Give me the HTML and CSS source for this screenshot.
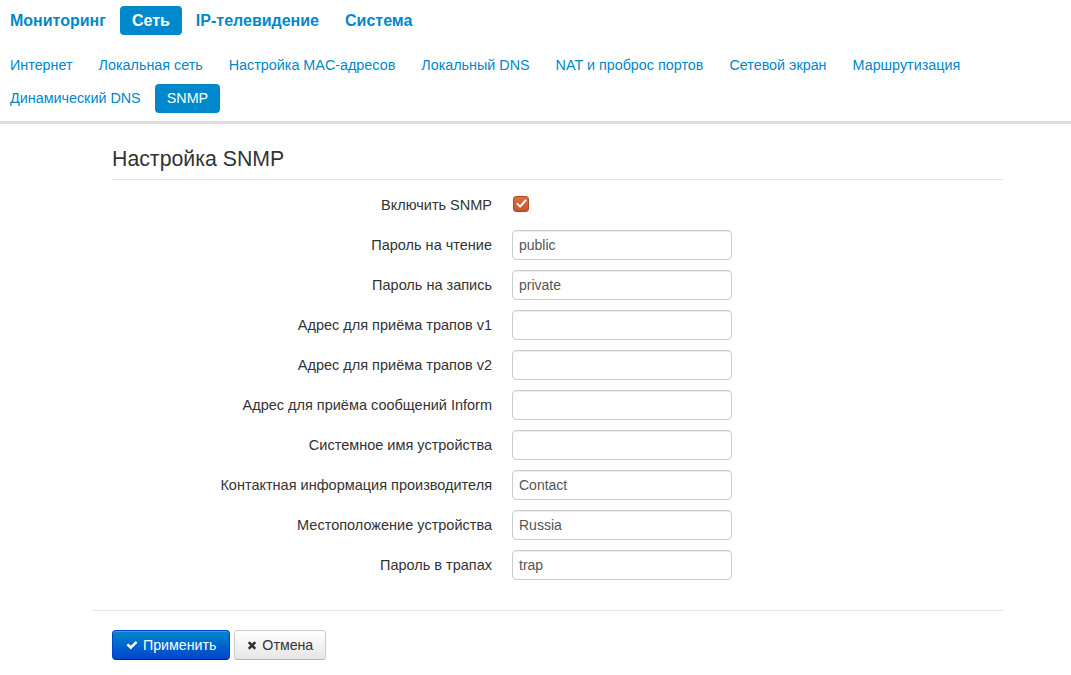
FILE: index.html
```html
<!DOCTYPE html>
<html lang="ru">

<head>
    <meta charset="UTF-8">
    <meta name="viewport" content="width=device-width, initial-scale=1.0">
    <title>SNMP</title>
    <link rel="stylesheet" href="styles.css">
</head>

<body>

    <!-- Main menu -->
    <ul class="nav nav-main">
        <li><a href="#">Мониторинг</a></li>
        <li class="active"><a href="#">Сеть</a></li>
        <li><a href="#">IP-телевидение</a></li>
        <li><a href="#">Система</a></li>
    </ul>

    <!-- Sub menu -->
    <ul class="nav nav-sub">
        <li><a href="#">Интернет</a></li>
        <li><a href="#">Локальная сеть</a></li>
        <li><a href="#">Настройка MAC-адресов</a></li>
        <li><a href="#">Локальный DNS</a></li>
        <li><a href="#">NAT и проброс портов</a></li>
        <li><a href="#">Сетевой экран</a></li>
        <li><a href="#">Маршрутизация</a></li>
        <li><a href="#">Динамический DNS</a></li>
        <li class="active"><a href="#">SNMP</a></li>
    </ul>

    <div class="nav-bar"></div>

    <div class="content">
        <h2>Настройка SNMP</h2>

        <form class="form-horizontal">
            <div class="control-group">
                <label class="control-label">Включить SNMP</label>
                <div class="controls">
                    <span class="checkbox">
                        <svg viewBox="0 0 16 16" width="11" height="11">
                            <path d="M2 8.5 L6 12.5 L14 3.5" fill="none" stroke="#fff" stroke-width="2.8" stroke-linecap="round" stroke-linejoin="round"/>
                        </svg>
                    </span>
                </div>
            </div>
            <div class="control-group">
                <label class="control-label">Пароль на чтение</label>
                <div class="controls"><input type="text" value="public"></div>
            </div>
            <div class="control-group">
                <label class="control-label">Пароль на запись</label>
                <div class="controls"><input type="text" value="private"></div>
            </div>
            <div class="control-group">
                <label class="control-label">Адрес для приёма трапов v1</label>
                <div class="controls"><input type="text" value=""></div>
            </div>
            <div class="control-group">
                <label class="control-label">Адрес для приёма трапов v2</label>
                <div class="controls"><input type="text" value=""></div>
            </div>
            <div class="control-group">
                <label class="control-label">Адрес для приёма сообщений Inform</label>
                <div class="controls"><input type="text" value=""></div>
            </div>
            <div class="control-group">
                <label class="control-label">Системное имя устройства</label>
                <div class="controls"><input type="text" value=""></div>
            </div>
            <div class="control-group">
                <label class="control-label">Контактная информация производителя</label>
                <div class="controls"><input type="text" value="Contact"></div>
            </div>
            <div class="control-group">
                <label class="control-label">Местоположение устройства</label>
                <div class="controls"><input type="text" value="Russia"></div>
            </div>
            <div class="control-group">
                <label class="control-label">Пароль в трапах</label>
                <div class="controls"><input type="text" value="trap"></div>
            </div>

            <div class="form-actions">
                <button type="button" class="btn btn-primary">
                    <svg class="icon" viewBox="0 0 1792 1792" width="12" height="12"><path fill="#fff" d="M1671 566q0 40-28 68l-724 724-136 136q-28 28-68 28t-68-28l-136-136-362-362q-28-28-28-68t28-68l136-136q28-28 68-28t68 28l294 295 656-657q28-28 68-28t68 28l136 136q28 28 28 68z"/></svg>Применить
                </button>
                <button type="button" class="btn">
                    <svg class="icon" viewBox="0 0 1408 1792" width="10" height="12"><path fill="#333" d="M1298 1322q0 40-28 68l-136 136q-28 28-68 28t-68-28l-294-294-294 294q-28 28-68 28t-68-28l-136-136q-28-28-28-68t28-68l294-294-294-294q-28-28-28-68t28-68l136-136q28-28 68-28t68 28l294 294 294-294q28-28 68-28t68 28l136 136q28 28 28 68t-28 68l-294 294 294 294q28 28 28 68z"/></svg>Отмена
                </button>
            </div>
        </form>
    </div>

</body>

</html>
```

FILE: styles.css
```css
body {
    font-family: "Liberation Sans", Arial, sans-serif;
    font-size: 14.5px;
    color: #333;
    margin: 0;
    padding: 0;
    background-color: #fff;
}

a {
    color: #0088cc;
    text-decoration: none;
}

/* Menus */
.nav {
    display: flex;
    flex-wrap: wrap;
    list-style: none;
    margin: 0 0 0 -2px;
    padding: 0;
}

.nav li a {
    display: block;
    padding: 6px 12px;
    margin: 2px 2px 2px 0;
    line-height: 17px;
    border-radius: 4px;
}

.nav li.active a {
    background-color: #0088cc;
    color: #fff;
}

.nav-main {
    margin-top: 4px;
}

.nav-main li a {
    font-size: 16px;
    font-weight: bold;
}

.nav-sub {
    margin-top: 12px;
}

.nav-sub li a {
    font-size: 14.35px;
}

.nav-bar {
    height: 3px;
    margin-top: 6px;
    background-color: #ddd;
}

/* Content */
.content {
    width: 891px;
    margin-left: 112px;
}

.content h2 {
    font-size: 21.3px;
    font-weight: normal;
    line-height: 25px;
    margin: 23px 0 0;
    padding-bottom: 7px;
    border-bottom: 1px solid #e5e5e5;
}

.form-horizontal {
    margin: 10px 0 0;
}

.control-group {
    display: flex;
    align-items: center;
    height: 30px;
    margin-bottom: 10px;
}

.control-label {
    width: 380px;
    text-align: right;
    line-height: 30px;
}

.controls {
    margin-left: 20px;
    display: flex;
    align-items: center;
}

.controls input {
    box-sizing: border-box;
    width: 220px;
    height: 30px;
    padding: 4px 6px;
    font-family: inherit;
    font-size: 14px;
    color: #555;
    border: 1px solid #ccc;
    border-radius: 4px;
    box-shadow: inset 0 1px 1px rgba(0, 0, 0, 0.075);
    margin: 0;
}

.checkbox {
    box-sizing: border-box;
    display: flex;
    align-items: center;
    justify-content: center;
    width: 16px;
    height: 16px;
    margin-left: 1px;
    margin-top: -3px;
    border-radius: 3px;
    border: 1px solid #b14d25;
    background: linear-gradient(#de6f3f, #c7562b);
}

/* Buttons */
.form-actions {
    margin: 30px 0 0 -20px;
    padding: 19px 0 0 20px;
    border-top: 1px solid #e5e5e5;
}

.btn {
    display: inline-flex;
    align-items: center;
    height: 30px;
    padding: 0 12px;
    font-family: inherit;
    font-size: 14.2px;
    color: #333;
    background: linear-gradient(#ffffff, #e6e6e6);
    border: 1px solid #ccc;
    border-bottom-color: #b3b3b3;
    border-radius: 4px;
    box-shadow: inset 0 1px 0 rgba(255, 255, 255, 0.2), 0 1px 2px rgba(0, 0, 0, 0.05);
    cursor: pointer;
    vertical-align: top;
    margin: 0;
}

.btn-primary {
    color: #fff;
    background: linear-gradient(#0088cc, #0044cc);
    border-color: #0044cc #0044cc #002a80;
    padding: 0 13px;
}

.btn .icon {
    margin-right: 5px;
}
```
